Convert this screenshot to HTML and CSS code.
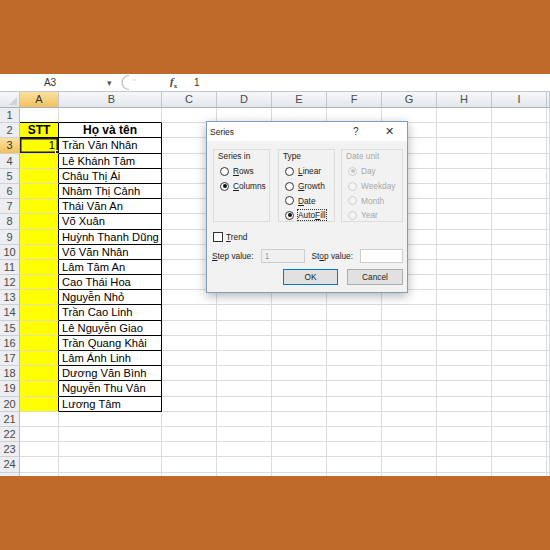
FILE: index.html
```html
<!DOCTYPE html>
<html lang="vi">
<head>
  <meta charset="UTF-8">
  <title>Series - AutoFill</title>
  <link rel="stylesheet" href="styles.css">
</head>
<body>
  <div class="band"></div>

  <div class="sheet">
    <div class="formula-bar">
      <div class="namebox">A3</div>
      <div class="nb-arrow">▾</div>
      <div class="split">
        <svg width="20" height="17" viewBox="0 0 20 17"><path d="M9 1.5 A7 7 0 0 0 9 15.5" fill="none" stroke="#b8bcc2" stroke-width="1.2"/><circle cx="13" cy="6" r="0.7" fill="#c8ccd2"/><circle cx="15" cy="6" r="0.7" fill="#c8ccd2"/></svg>
      </div>
      <div class="fx"><i>f</i><sub>x</sub></div>
      <div class="fval">1</div>
    </div>

    <div class="grid" id="grid">
      <div class="row heads">
        <div class="cell rh corner"></div>
        <div class="cell ca sel">A</div>
        <div class="cell cb">B</div>
        <div class="cell cx">C</div>
        <div class="cell cx">D</div>
        <div class="cell cx">E</div>
        <div class="cell cx">F</div>
        <div class="cell cx">G</div>
        <div class="cell cx">H</div>
        <div class="cell cx">I</div>
        <div class="cell cj"></div>
      </div>
    </div>

    <div class="dialog">
      <div class="dlg-title">
        <span class="dlg-name">Series</span>
        <span class="dlg-help">?</span>
        <span class="dlg-close">✕</span>
      </div>
      <div class="dlg-body">
        <div class="groups">
          <div class="group g-in">
            <div class="g-title">Series in</div>
            <div class="opt"><span class="radio"></span><span><u>R</u>ows</span></div>
            <div class="opt"><span class="radio on"></span><span><u>C</u>olumns</span></div>
          </div>
          <div class="group g-type">
            <div class="g-title">Type</div>
            <div class="opt"><span class="radio"></span><span><u>L</u>inear</span></div>
            <div class="opt"><span class="radio"></span><span><u>G</u>rowth</span></div>
            <div class="opt"><span class="radio"></span><span><u>D</u>ate</span></div>
            <div class="opt"><span class="radio on"></span><span class="focus">Auto<u>F</u>ill</span></div>
          </div>
          <div class="group g-unit off">
            <div class="g-title">Date unit</div>
            <div class="opt"><span class="radio on"></span><span>Day</span></div>
            <div class="opt"><span class="radio"></span><span>Weekday</span></div>
            <div class="opt"><span class="radio"></span><span>Month</span></div>
            <div class="opt"><span class="radio"></span><span>Year</span></div>
          </div>
        </div>
        <div class="trend"><span class="check"></span><span><u>T</u>rend</span></div>
        <div class="values">
          <span class="lbl lbl-step"><u>S</u>tep value:</span>
          <span class="field field-off">1</span>
          <span class="lbl lbl-stop">St<u>o</u>p value:</span>
          <span class="field"></span>
        </div>
        <div class="buttons">
          <span class="btn btn-ok">OK</span>
          <span class="btn">Cancel</span>
        </div>
      </div>
    </div>
  </div>

  <div class="band band-bottom"></div>

  <script>
    const names = [
      "Trần Văn Nhân", "Lê Khánh Tâm", "Châu Thị Ái", "Nhâm Thị Cảnh",
      "Thái Văn An", "Võ Xuân", "Huỳnh Thanh Dũng", "Võ Văn Nhân",
      "Lâm Tâm An", "Cao Thái Hoa", "Nguyễn Nhỏ", "Trần Cao Linh",
      "Lê Nguyễn Giao", "Trần Quang Khải", "Lâm Ánh Linh", "Dương Văn Bình",
      "Nguyễn Thu Vân", "Lương Tâm"
    ];

    // Build rows 1..25
    const grid = document.getElementById("grid");
    let html = "";
    for (let r = 1; r <= 25; r++) {
      let aCls = "cell ca", bCls = "cell cb", aTxt = "", bTxt = "";
      if (r === 1) { aCls += " tb"; bCls += " tb"; }
      if (r >= 2 && r <= 20) { aCls += " y"; bCls += " box"; }
      if (r === 2) { aCls += " head tb"; bCls += " head"; aTxt = "STT"; bTxt = "Họ và tên"; }
      if (r === 3) { aCls += " active"; aTxt = "1"; }
      if (r >= 3 && r <= 20) bTxt = names[r - 3];

      html += '<div class="row">';
      html += `<div class="cell rh${r === 3 ? " sel" : ""}">${r < 25 ? r : ""}</div>`;
      html += `<div class="${aCls}">${aTxt}</div>`;
      html += `<div class="${bCls}">${bTxt}</div>`;
      for (let c = 0; c < 7; c++) html += '<div class="cell cx"></div>';
      html += '<div class="cell cj"></div></div>';
    }
    grid.insertAdjacentHTML("beforeend", html);
  </script>
</body>
</html>
```

FILE: styles.css
```css
body {
  margin: 0;
  background: #bf6a2b;
  font-family: "Liberation Sans", Arial, sans-serif;
}
.band {
  height: 74px;
}
.sheet {
  position: relative;
  height: 402px;
  background: #fff;
  overflow: hidden;
}

/* formula bar */
.formula-bar {
  display: flex;
  align-items: center;
  height: 17px;
  border-bottom: 1px solid #c4c7cc;
  font-size: 10px;
  color: #333;
}
.namebox {
  width: 100px;
  text-align: center;
}
.nb-arrow {
  width: 18px;
  text-align: center;
  font-size: 9px;
  color: #555;
}
.split {
  width: 50px;
  height: 17px;
  padding-left: 2px;
}
.fx {
  width: 20px;
  font-family: "Liberation Serif", serif;
  font-size: 11px;
  font-weight: bold;
  color: #444;
}
.fx sub {
  font-size: 7px;
}
.fval {
  padding-left: 4px;
  font-size: 10px;
}

/* grid */
.row {
  display: flex;
  height: 15.2px;
}
.heads {
  height: 16px;
}
.cell {
  flex: none;
  box-sizing: border-box;
  height: 100%;
  border-right: 1px solid #dadcdd;
  border-bottom: 1px solid #dadcdd;
  font-size: 11.2px;
  line-height: 14px;
  white-space: nowrap;
  overflow: hidden;
  color: #000;
}
.rh {
  width: 20px;
  background: #eceef1;
  border-right-color: #b8bec6;
  border-bottom-color: #cdd1d6;
  text-align: center;
  font-size: 11px;
  color: #4a4a4a;
}
.ca { width: 39px; }
.cb { width: 103px; padding-left: 3px; }
.cx { width: 55px; }
.cj { flex: 1; }

.heads .cell {
  background: linear-gradient(#f6f7f9, #e4e7eb);
  border-right-color: #c2c7ce;
  border-bottom-color: #a9b1bb;
  text-align: center;
  font-size: 11px;
  line-height: 15px;
  color: #4a4a4a;
}
.heads .cell.sel,
.rh.sel {
  background: linear-gradient(#fbe1a0, #f1c15d);
  color: #333;
}
.corner {
  position: relative;
}
.corner::after {
  content: "";
  position: absolute;
  right: 2px;
  bottom: 2px;
  border-left: 8px solid transparent;
  border-bottom: 8px solid #cfd3d8;
}

.y {
  background: #ffff00;
  border-right: 1px solid #000;
  border-bottom-color: #e2e2b0;
}
.tb {
  border-bottom: 1px solid #000;
}
.box {
  border-right: 1px solid #000;
  border-bottom: 1px solid #000;
}
.head {
  font-weight: bold;
  text-align: center;
  font-size: 12px;
}
.cb.head {
  padding-left: 0;
}
.active {
  position: relative;
  text-align: right;
  padding-right: 3px;
  box-shadow: inset 0 0 0 1.5px #1f1f1f;
}
.active::after {
  content: "";
  position: absolute;
  right: -3px;
  bottom: -3px;
  width: 4px;
  height: 4px;
  background: #1f1f1f;
  border: 1px solid #fff;
}

/* series dialog */
.dialog {
  position: absolute;
  left: 206px;
  top: 47px;
  width: 202px;
  height: 172px;
  box-sizing: border-box;
  border: 1px solid #7f9dbd;
  background: #f2f2f2;
  box-shadow: 0 3px 10px rgba(0, 0, 0, 0.3);
  font-size: 8.3px;
  color: #222;
}
.dlg-title {
  display: flex;
  align-items: center;
  height: 19px;
  background: #fff;
  padding-left: 3px;
}
.dlg-name {
  flex: 1;
  font-size: 8.5px;
}
.dlg-help {
  width: 32px;
  font-size: 10px;
  color: #333;
}
.dlg-close {
  width: 22px;
  font-size: 11px;
  color: #333;
}
.dlg-body {
  padding: 8px 4px 0 6px;
}
.groups {
  display: flex;
  height: 73px;
}
.group {
  box-sizing: border-box;
  height: 73px;
  border: 1px solid #dcdcdc;
  padding: 1px 0 0 4px;
}
.g-in { width: 57px; }
.g-type { width: 57px; margin-left: 8px; }
.g-unit { width: 62px; margin-left: 6px; }
.g-title {
  height: 12px;
  line-height: 10px;
  margin-bottom: 1px;
}
.opt {
  display: flex;
  align-items: center;
  height: 14.7px;
  padding-left: 2px;
  gap: 4px;
}
.radio {
  width: 9px;
  height: 9px;
  box-sizing: border-box;
  border: 1px solid #333;
  border-radius: 50%;
  background: #fff;
  position: relative;
}
.radio.on::after {
  content: "";
  position: absolute;
  left: 1.5px;
  top: 1.5px;
  width: 4px;
  height: 4px;
  border-radius: 50%;
  background: #111;
}
.focus {
  outline: 1px dotted #333;
  outline-offset: 0;
}
.off {
  color: #a8a8a8;
}
.off .radio {
  border-color: #d0d0d0;
  background: #f4f4f4;
}
.off .radio.on::after {
  background: #c4c4c4;
}

.trend {
  display: flex;
  align-items: center;
  gap: 3px;
  height: 12px;
  margin-top: 9px;
}
.check {
  width: 10px;
  height: 10px;
  box-sizing: border-box;
  border: 1px solid #333;
  background: #fff;
}
.values {
  display: flex;
  align-items: center;
  height: 14px;
  margin-top: 6px;
  margin-left: -1px;
}
.lbl-step { width: 49px; }
.lbl-stop { width: 49px; margin-left: 7px; }
.field {
  width: 43px;
  height: 14px;
  box-sizing: border-box;
  border: 1px solid #cdcdcd;
  background: #fff;
  padding-left: 3px;
  line-height: 12px;
}
.field-off {
  width: 44px;
  background: #f0f0f0;
  color: #9a9a9a;
}
.buttons {
  display: flex;
  justify-content: flex-end;
  gap: 9px;
  margin-top: 6px;
}
.btn {
  width: 56px;
  height: 16px;
  box-sizing: border-box;
  border: 1px solid #adadad;
  background: #e1e1e1;
  text-align: center;
  line-height: 14px;
}
.btn-ok {
  width: 55px;
  border-color: #0078d7;
}
.band-bottom {
  height: 74px;
}
```
